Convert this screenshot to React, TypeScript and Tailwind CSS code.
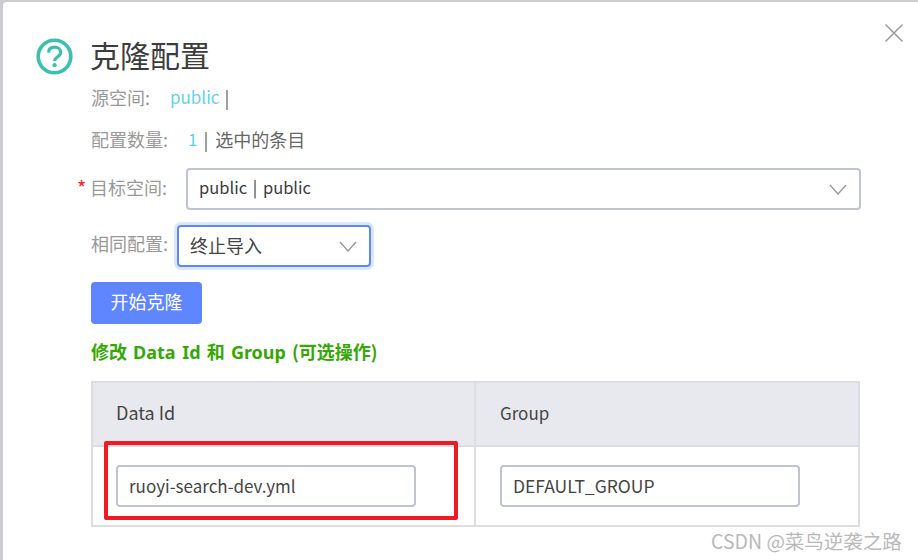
const font = { fontFamily: '"Noto Sans CJK SC", "Noto Sans", sans-serif' };
const latinBold = { fontFamily: '"Noto Sans", sans-serif' };

function Chevron({ className }: { className?: string }) {
  return (
    <svg viewBox="0 0 18 11" className={className} fill="none" stroke="#9a9a9a" strokeWidth="1.4">
      <path d="M1 1 L9 10 L17 1" />
    </svg>
  );
}

function HelpIcon() {
  return (
    <svg viewBox="0 0 37 37" className="w-[37px] h-[37px] shrink-0" fill="none">
      <circle cx="18.5" cy="18.5" r="16.3" stroke="#3cc0ae" strokeWidth="3.6" />
      <path d="M12.5 14.6 C12.7 11 15.2 9.2 18.6 9.2 C22.2 9.2 24.6 11.3 24.6 14.2 C24.6 16.6 23.2 17.8 21.4 19 C19.6 20.2 18.7 21 18.7 23" stroke="#3cc0ae" strokeWidth="3.2" />
      <circle cx="18.6" cy="27.2" r="2.1" fill="#3cc0ae" />
    </svg>
  );
}

export default function App() {
  return (
    <div className="w-[918px] h-[560px] overflow-hidden bg-[#cdcdd1] pl-[3px] pt-[2px]" style={font}>
      <div className="relative h-[558px] bg-white rounded-tl-[4px] pl-[33px] pt-[33px] text-[18px]">
        <button className="absolute left-[881px] top-[21px] w-[20px] h-[20px]">
          <svg viewBox="0 0 20 20" className="w-[20px] h-[20px]" fill="none" stroke="#9a9a9a" strokeWidth="1.5">
            <path d="M1.5 1.5 L18.5 18.5 M18.5 1.5 L1.5 18.5" />
          </svg>
        </button>

        <div className="flex items-center gap-[17px] h-[42px]">
          <HelpIcon />
          <h1 className="text-[30px] leading-[42px] pb-[4px] text-[#3c3c3c]">克隆配置</h1>
        </div>

        <div className="ml-[55px]">
          <div className="flex h-[24px] mt-[8px] items-center leading-[24px]">
            <span className="text-[#999999] w-[79px]">源空间:</span>
            <span className="text-[#63d2ea] text-[17px]">public</span>
            <span className="text-[#666666] ml-[5px]">|</span>
          </div>
          <div className="flex h-[24px] mt-[18px] items-center leading-[24px]">
            <span className="text-[#999999] w-[97px]">配置数量:</span>
            <span className="text-[#63d2ea] text-[17px]">1</span>
            <span className="text-[#666666] ml-[6px]">|</span>
            <span className="text-[#666666] ml-[7px]">选中的条目</span>
          </div>

          <div className="flex items-center mt-[17px] -ml-[14px]">
            <span className="text-[#f5222d] text-[20px] w-[13px] pb-[2px]">*</span>
            <span className="text-[#999999] w-[96px] pb-[4px]">目标空间:</span>
            <div className="w-[675px] h-[42px] border-2 border-[#c0c4d0] rounded-[4px] flex items-center justify-between pl-[11px] pr-[12px] text-[16.5px] text-[#3c3c3c]">
              <span className="pb-[3px] [word-spacing:2px]">public | public</span>
              <Chevron className="w-[18px] h-[11px]" />
            </div>
          </div>

          <div className="flex items-center mt-[15px]">
            <span className="text-[#999999] w-[86px] pb-[5px]">相同配置:</span>
            <div className="w-[194px] h-[42px] border-2 border-[#5f86ff] rounded-[4px] ring-[3px] ring-[#dde6ff] flex items-center justify-between pl-[11px] pr-[12px] text-[#444444]">
              <span className="pb-[2px]">终止导入</span>
              <Chevron className="w-[18px] h-[11px]" />
            </div>
          </div>

          <button className="block w-[111px] h-[42px] mt-[15px] pb-[3px] bg-[#5f86ff] rounded-[4px] text-white">开始克隆</button>

          <h2 className="mt-[16px] h-[22px] leading-[22px] font-bold text-[#34a803] whitespace-nowrap [word-spacing:2px]">
            修改 <span style={latinBold}>Data Id</span> 和 <span style={latinBold}>Group</span> (可选操作)
          </h2>

          <div className="mt-[19px] w-[769px] border-2 border-[#dcdde4] grid grid-cols-[383px_1fr]">
            <div className="h-[64px] bg-[#e8e9ee] border-r-2 border-b-2 border-[#dcdde4] pl-[23px] pb-[3px] flex items-center text-[#444444]">Data Id</div>
            <div className="h-[64px] bg-[#e8e9ee] border-b-2 border-[#dcdde4] pl-[24px] pb-[3px] flex items-center text-[17px] text-[#444444]">Group</div>
            <div className="h-[78px] border-r-2 border-[#dcdde4] pl-[23px] flex items-center">
              <input readOnly value="ruoyi-search-dev.yml" className="w-[300px] h-[42px] border-2 border-[#c0c4d0] rounded-[4px] pl-[11px] pb-[1px] text-[17px] text-[#444444] outline-none" />
            </div>
            <div className="h-[78px] pl-[24px] flex items-center">
              <input readOnly value="DEFAULT_GROUP" className="w-[300px] h-[42px] border-2 border-[#c0c4d0] rounded-[4px] pl-[11px] pb-[1px] text-[17.5px] text-[#444444] outline-none" />
            </div>
          </div>
        </div>

        <div className="absolute left-[101px] top-[439px] w-[354px] h-[79px] border-[4px] border-[#ed1c24] rounded-[2px]" />
        <div className="absolute left-[708px] top-[525px] text-[19.5px] leading-[28px] text-[#b9b9b9] whitespace-nowrap">CSDN @菜鸟逆袭之路</div>
      </div>
    </div>
  );
}
